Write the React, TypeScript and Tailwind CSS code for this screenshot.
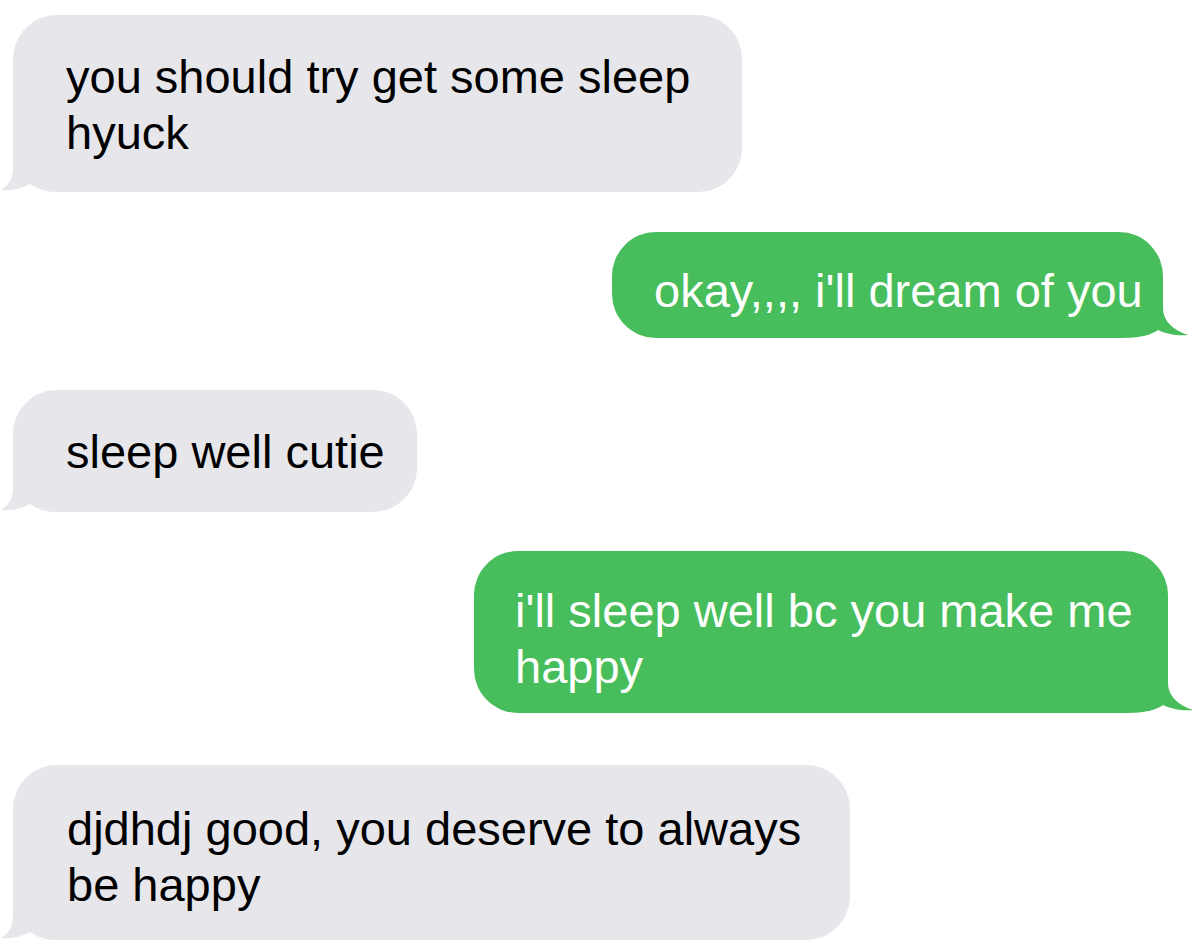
import type { JSX, ReactNode } from 'react';

type Side = 'left' | 'right';

function Tail({ side, color }: { side: Side; color: string }): JSX.Element {
  if (side === 'left') {
    return (
      <svg
        className="absolute bottom-0 left-[-13px]"
        width="60"
        height="50"
        viewBox="0 0 60 50"
      >
        <path
          d="M13 0 L13 26 C13 37 8 44 1 48 C10 49 21 47 30 42 C37 47 45 50 60 50 L60 0 Z"
          fill={color}
        />
      </svg>
    );
  }
  return (
    <svg
      className="absolute bottom-0 right-[-26px]"
      width="70"
      height="50"
      viewBox="0 0 70 50"
    >
      <path
        d="M44 0 L44 20 C44 33 54 42 69 47 C58 48 47 46 39 42 C32 47 22 50 0 50 L0 0 Z"
        fill={color}
      />
    </svg>
  );
}

function Bubble({
  side,
  className,
  children,
}: {
  side: Side;
  className: string;
  children: ReactNode;
}): JSX.Element {
  const sent = side === 'right';
  return (
    <div
      className={
        'relative shrink-0 rounded-[44px] whitespace-nowrap text-[47px] leading-[56px] ' +
        (sent
          ? 'self-end bg-[#48bd5b] text-white '
          : 'self-start bg-[#e6e6eb] text-black ') +
        className
      }
    >
      <Tail side={side} color={sent ? '#48bd5b' : '#e6e6eb'} />
      <div className="relative">{children}</div>
    </div>
  );
}

export default function App(): JSX.Element {
  return (
    <div className="flex h-[952px] w-[1200px] flex-col overflow-hidden bg-white font-['Liberation_Sans',Arial,sans-serif]">
      <Bubble side="left" className="ml-[13px] mt-[15px] h-[177px] w-[729px] pl-[53px] pt-[34px]">
        you should try get some sleep
        <br />
        hyuck
      </Bubble>
      <Bubble side="right" className="mr-[37px] mt-[40px] h-[106px] w-[551px] pl-[42px] pt-[31px]">
        okay,,,, i'll dream of you
      </Bubble>
      <Bubble side="left" className="ml-[13px] mt-[52px] h-[122px] w-[404px] pl-[53px] pt-[34px]">
        sleep well cutie
      </Bubble>
      <Bubble side="right" className="mr-[32px] mt-[39px] h-[162px] w-[694px] pl-[41px] pt-[32px]">
        i'll sleep well bc you make me
        <br />
        happy
      </Bubble>
      <Bubble side="left" className="ml-[13px] mt-[52px] h-[175px] w-[837px] pl-[54px] pt-[36px]">
        djdhdj good, you deserve to always
        <br />
        be happy
      </Bubble>
    </div>
  );
}
